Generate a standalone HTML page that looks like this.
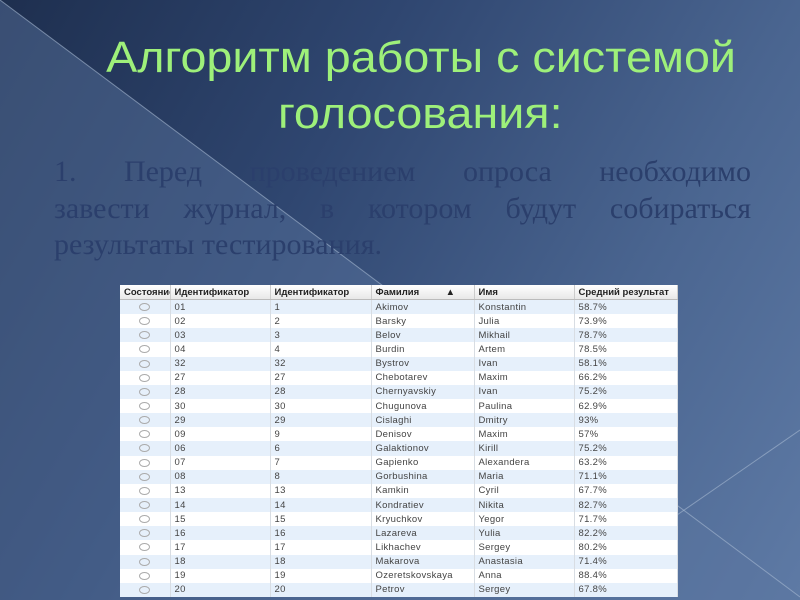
<!DOCTYPE html>
<html><head><meta charset="utf-8"><style>
html,body{margin:0;padding:0}
body{width:800px;height:600px;overflow:hidden;position:relative;background:linear-gradient(120deg,#1e2f4f 0%,#2f4670 35%,#4a6590 70%,#5e7aa5 100%);font-family:"Liberation Sans",sans-serif}
svg.bg{position:absolute;left:0;top:0}
.t{position:absolute;left:0;width:800px;text-align:center;color:#9ef07a;font-size:44px;line-height:44px;white-space:nowrap}
.t span{display:inline-block;transform:scaleX(1.06)}
.p{position:absolute;left:54px;width:697px;font-family:"Liberation Serif",serif;font-size:30px;line-height:30px;color:#2b3f6c;text-align:justify;text-align-last:justify;white-space:nowrap}
table{position:absolute;left:120px;top:285px;width:557px;border-collapse:collapse;background:#fff;font-size:9.5px;color:#444;table-layout:fixed;letter-spacing:0.3px}
td,th{height:14.15px;padding:0 0 0 4px;border-right:1px solid #d8dde3;white-space:nowrap;overflow:hidden;text-align:left}
th{height:14px;font-weight:bold;color:#222;background:linear-gradient(#fff,#e8e8e8);border-bottom:1px solid #bbb;border-right:1px solid #ccc;letter-spacing:0}
tr:nth-child(even) td{background:#e6f0fb}
td.r{text-align:center;padding:0}
td.r i{display:inline-block;width:9px;height:6px;border:1px solid #aaa;border-radius:50%;vertical-align:middle}
</style></head><body>
<svg class="bg" width="800" height="600">
<polygon points="0,0 800,597 800,600 0,600" fill="#5a76a0" opacity="0.45"/>
<line x1="0" y1="0" x2="800" y2="597" stroke="#a8bad2" stroke-width="1" opacity="0.6"/>
<line x1="677" y1="515" x2="800" y2="430" stroke="#a8bad2" stroke-width="1" opacity="0.6"/>
</svg>
<div class="t" style="top:36px;left:21px"><span>Алгоритм работы с системой</span></div>
<div class="t" style="top:92px;left:20px"><span>голосования:</span></div>
<div class="p" style="top:157px">1. Перед проведением опроса необходимо</div>
<div class="p" style="top:194px">завести журнал, в котором будут собираться</div>
<div class="p" style="top:230px;text-align-last:left">результаты тестирования.</div>
<table>
<colgroup><col style="width:50px"><col style="width:100px"><col style="width:101px"><col style="width:103px"><col style="width:100px"><col style="width:103px"></colgroup>
<tr><th>Состояние</th><th>Идентификатор</th><th>Идентификатор</th><th>Фамилия &nbsp; &nbsp; &nbsp; &nbsp; &nbsp;▲</th><th>Имя</th><th>Средний результат</th></tr>
<tr><td class="r"><i></i></td><td>01</td><td>1</td><td>Akimov</td><td>Konstantin</td><td>58.7%</td></tr>
<tr><td class="r"><i></i></td><td>02</td><td>2</td><td>Barsky</td><td>Julia</td><td>73.9%</td></tr>
<tr><td class="r"><i></i></td><td>03</td><td>3</td><td>Belov</td><td>Mikhail</td><td>78.7%</td></tr>
<tr><td class="r"><i></i></td><td>04</td><td>4</td><td>Burdin</td><td>Artem</td><td>78.5%</td></tr>
<tr><td class="r"><i></i></td><td>32</td><td>32</td><td>Bystrov</td><td>Ivan</td><td>58.1%</td></tr>
<tr><td class="r"><i></i></td><td>27</td><td>27</td><td>Chebotarev</td><td>Maxim</td><td>66.2%</td></tr>
<tr><td class="r"><i></i></td><td>28</td><td>28</td><td>Chernyavskiy</td><td>Ivan</td><td>75.2%</td></tr>
<tr><td class="r"><i></i></td><td>30</td><td>30</td><td>Chugunova</td><td>Paulina</td><td>62.9%</td></tr>
<tr><td class="r"><i></i></td><td>29</td><td>29</td><td>Cislaghi</td><td>Dmitry</td><td>93%</td></tr>
<tr><td class="r"><i></i></td><td>09</td><td>9</td><td>Denisov</td><td>Maxim</td><td>57%</td></tr>
<tr><td class="r"><i></i></td><td>06</td><td>6</td><td>Galaktionov</td><td>Kirill</td><td>75.2%</td></tr>
<tr><td class="r"><i></i></td><td>07</td><td>7</td><td>Gapienko</td><td>Alexandera</td><td>63.2%</td></tr>
<tr><td class="r"><i></i></td><td>08</td><td>8</td><td>Gorbushina</td><td>Maria</td><td>71.1%</td></tr>
<tr><td class="r"><i></i></td><td>13</td><td>13</td><td>Kamkin</td><td>Cyril</td><td>67.7%</td></tr>
<tr><td class="r"><i></i></td><td>14</td><td>14</td><td>Kondratiev</td><td>Nikita</td><td>82.7%</td></tr>
<tr><td class="r"><i></i></td><td>15</td><td>15</td><td>Kryuchkov</td><td>Yegor</td><td>71.7%</td></tr>
<tr><td class="r"><i></i></td><td>16</td><td>16</td><td>Lazareva</td><td>Yulia</td><td>82.2%</td></tr>
<tr><td class="r"><i></i></td><td>17</td><td>17</td><td>Likhachev</td><td>Sergey</td><td>80.2%</td></tr>
<tr><td class="r"><i></i></td><td>18</td><td>18</td><td>Makarova</td><td>Anastasia</td><td>71.4%</td></tr>
<tr><td class="r"><i></i></td><td>19</td><td>19</td><td>Ozeretskovskaya</td><td>Anna</td><td>88.4%</td></tr>
<tr><td class="r"><i></i></td><td>20</td><td>20</td><td>Petrov</td><td>Sergey</td><td>67.8%</td></tr>
</table>
</body></html>
